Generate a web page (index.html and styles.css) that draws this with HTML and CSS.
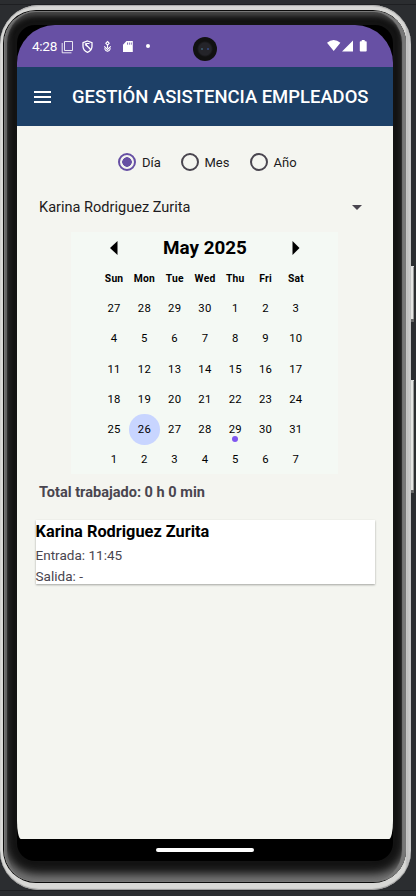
FILE: index.html
```html
<!DOCTYPE html>
<html lang="es">
<head>
<meta charset="utf-8">
<title>Gestión asistencia empleados</title>
<link rel="stylesheet" href="styles.css">
</head>
<body>
<div class="stage">
  <i class="key power"></i><i class="key volume"></i>
  <div class="phone"><div class="bezel"><div class="glass"><div class="screen">
    <div class="status">
      <span class="clock">4:28</span>
      <svg class="status-left" width="92" height="14" viewBox="0 0 92 14" fill="none" stroke="#fff">
        <path d="M3.500 1.500h8v9h-8zM1.200 3v9.800h9.300" stroke-width="1" opacity=".85"/>
        <path d="M26.500 1l4.500 1.600v3.700c0 3-1.800 5-4.500 6-2.700-1-4.500-3-4.500-6V2.600z" stroke-width="1.300"/>
        <path d="M24 3.500l6 6.500M28.500 3.500h-2.800l-.8 1.800 3.400 2.500" stroke-width="1.200"/>
        <path d="M46.500 1.500l1.700 1.800-1.700 1.800-1.700-1.800zM46.500 5v3M43.200 6.300l3.300 3.200 3.300-3.200M43.500 8.300c.5 1.500 1.600 2.500 3 3 1.400-.5 2.500-1.500 3-3" stroke-width="1.100"/>
        <path d="M65.500 1h6.300v11H62V4.700z" fill="#fff" stroke="none"/>
        <path d="M66.500 2.500v2.200M68.400 2.500v2.200M70.300 2.500v2.200" stroke="#6750a4" stroke-width=".8"/>
        <circle cx="87" cy="6" r="2" fill="#fff" stroke="none"/>
      </svg>
      <svg class="status-right" width="42" height="14" viewBox="0 0 42 14" fill="#fff">
        <path d="M0 3.800Q6.700-1.700 13.400 3.800L6.700 12zM26 1.500V12.600H15zM33.300 2.200h1.400V1h3v1.200h1.200q.8 0 .8.800v8.800q0 .8-.8.800h-5.300q-.8 0-.8-.8V3q0-.8.800-.8z"/>
      </svg>
      <i class="camera"></i>
    </div>
    <header class="bar">
      <svg width="18" height="12" viewBox="0 0 18 12"><path d="M0 1h17M0 6h17M0 11h17" stroke="#fff" stroke-width="2"/></svg>
      <h1>GESTIÓN ASISTENCIA EMPLEADOS</h1>
    </header>
    <main>
      <div class="radios">
        <label class="on"><i></i>Día</label><label><i></i>Mes</label><label><i></i>Año</label>
      </div>
      <div class="select"><span>Karina Rodriguez Zurita</span><i></i></div>
      <section class="calendar">
        <div class="month">
          <svg width="8" height="14" viewBox="0 0 8 14"><path d="M7.500 0v14L0 7z"/></svg>
          <h2>May 2025</h2>
          <svg width="8" height="14" viewBox="0 0 8 14"><path d="M.5 0v14L7.500 7z"/></svg>
        </div>
        <div class="days">
          <b>Sun</b><b>Mon</b><b>Tue</b><b>Wed</b><b>Thu</b><b>Fri</b><b>Sat</b>
          <span>27</span><span>28</span><span>29</span><span>30</span><span>1</span><span>2</span><span>3</span>
          <span>4</span><span>5</span><span>6</span><span>7</span><span>8</span><span>9</span><span>10</span>
          <span>11</span><span>12</span><span>13</span><span>14</span><span>15</span><span>16</span><span>17</span>
          <span>18</span><span>19</span><span>20</span><span>21</span><span>22</span><span>23</span><span>24</span>
          <span>25</span><span class="picked">26</span><span>27</span><span>28</span><span class="event">29</span><span>30</span><span>31</span>
          <span>1</span><span>2</span><span>3</span><span>4</span><span>5</span><span>6</span><span>7</span>
        </div>
      </section>
      <p class="total">Total trabajado: 0 h 0 min</p>
      <article class="card">
        <h3>Karina Rodriguez Zurita</h3>
        <p>Entrada: 11:45</p>
        <p>Salida: -</p>
      </article>
    </main>
    <footer class="nav"><i></i></footer>
  </div></div></div></div>
</div>
</body>
</html>
```
FILE: styles.css
```css
* { box-sizing: border-box; margin: 0; padding: 0; }
body { background: #2b2d30; font-family: Roboto, "Liberation Sans", sans-serif; color: #1d1b20; }
.stage {
  position: relative; width: 416px; height: 896px; padding: 5px 5px 6px 0; overflow: hidden;
  background: linear-gradient(#2b2d30 4px, #1e1f22 4px 5px, #2b2d30 5px 890px, #1e1f22 890px 891px, #2b2d30 891px);
}
.key { position: absolute; left: 410px; width: 4px; background: linear-gradient(90deg, #888 1px, #e4e4e2 1px 3px, #999 3px); border-top: 1px solid #ddd; border-bottom: 3px solid #666; }
.power { top: 266px; height: 56px; }
.volume { top: 380px; height: 113px; }
.phone { position: relative; height: 885px; padding: 5px 5px 7px 3px; border-radius: 39px; background: linear-gradient(90deg, #dededc, #d8d8d6 3px, #d8d8d6 405px, #bdbdbd 407px, #cfcfcf); box-shadow: inset 0 1px 1px #aaa, inset 0 -1px 1px #999; }
.bezel { height: 873px; padding: 1px 0 1px 1px; border-radius: 33px; background: #0b0b0b; }
.glass {
  position: relative; height: 871px; padding: 14px 13px 21px 13px; border-radius: 32px; background: #131313;
  box-shadow: inset 0 0 0 1px #777, inset 3px 0 1px #666, inset -4px 0 1px #777, inset 0 5px 5px #484848, inset 0 -8px 10px #777;
}
.glass::before { content: ""; position: absolute; inset: 14px 13px 21px 13px; background: #000; border-radius: 18px; }
.screen { position: relative; z-index: 1; height: 836px; display: flex; flex-direction: column; border-radius: 38px 38px 0 0; overflow: hidden; }
.status { position: relative; height: 42px; flex: none; background: #6750a4; color: #fff; display: flex; align-items: flex-start; padding: 14px 24px 0 15px; }
.clock { font-size: 13.600px; line-height: 14px; width: 29px; letter-spacing: -.3px; }
.status-left { margin-top: 1px; }
.status-right { margin-left: auto; }
.camera { position: absolute; left: 176px; top: 12px; width: 24px; height: 24px; border-radius: 50%; background: radial-gradient(circle at 9px 12px, #365060 0 1px, transparent 1.500px), radial-gradient(circle at 15px 12px, #304070 0 1px, transparent 1.500px), radial-gradient(circle, #242429 0 6px, #111 8px); }
.bar { height: 59px; flex: none; background: #1d4067; color: #fff; display: flex; align-items: center; padding-left: 17px; gap: 20px; }
h1 { font-size: 18.450px; font-weight: 500; line-height: 24px; white-space: nowrap; }
main { flex: 1; padding: 27px 18px 0; background: #f4f5f0; border-radius: 0 0 4px 4px / 0 0 18px 18px; }
.radios { display: flex; height: 18px; padding-left: 83px; }
label { display: flex; align-items: center; width: 62.500px; font-size: 13px; white-space: nowrap; }
label:nth-child(2) { width: 69px; }
label i { width: 18px; height: 18px; border: 2px solid #49454f; border-radius: 50%; margin-right: 6px; flex: none; }
label.on i { border-color: #6750a4; background: radial-gradient(circle, #6750a4 4.500px, transparent 5px); }
.select { display: flex; align-items: center; justify-content: space-between; margin-top: 26px; padding: 0 13px 0 4px; height: 20px; font-size: 14.550px; }
.select i { border: 5px solid transparent; border-top-color: #49454f; border-bottom: 0; }
.calendar { width: 267px; height: 242px; margin: 15px 0 0 36px; background: #f4f9f4; color: #000; }
.month { height: 31px; padding: 0 38px 0 39px; display: flex; align-items: center; justify-content: space-between; }
h2 { font-size: 18.850px; line-height: 24px; }
.days { display: grid; grid-template-columns: repeat(7, 30.300px); grid-auto-rows: 30.300px; justify-content: center; padding-left: 1px; }
.days > * { display: flex; align-items: center; justify-content: center; font-size: 11.300px; letter-spacing: .3px; }
.days b { font-size: 10.300px; letter-spacing: .2px; padding-top: 1px; }
.picked { background: #c8d5ff; border-radius: 50%; }
.event { position: relative; }
.event::after { content: ""; position: absolute; left: 12px; bottom: 2.500px; width: 6px; height: 6px; border-radius: 50%; background: #7f56f0; }
.total { margin: 9px 0 0 4px; font-size: 14.550px; line-height: 20px; font-weight: 700; color: #49454f; }
.card { width: 339px; height: 64px; margin: 17px 0 0 .5px; background: #fff; color: #49454f; box-shadow: 0 1px 2px #0005; }
h3 { font-size: 16.350px; line-height: 24px; color: #000; }
.card p { font-size: 13.550px; line-height: 20.500px; }
.card h3 + p { padding-top: 1px; }
.nav { flex: none; height: 22px; display: flex; justify-content: center; padding-top: 9px; }
.nav i { width: 98px; height: 4px; border-radius: 2px; background: #fff; }
```
